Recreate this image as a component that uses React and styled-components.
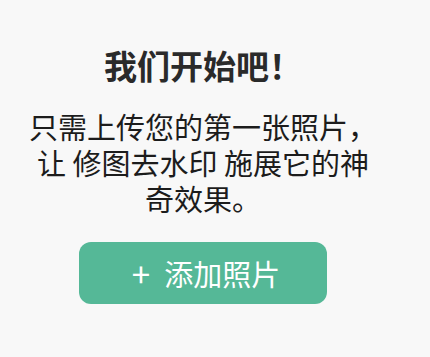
import React from "react";
import styled, { createGlobalStyle } from "styled-components";

const GlobalStyle = createGlobalStyle`
  html, body {
    margin: 0;
    padding: 0;
    background: #f8f8f8;
    font-family: "Noto Sans CJK SC", "Noto Sans", sans-serif;
  }
`;

const Page = styled.div`
  width: 356px;
  margin-left: 25px;
  padding-top: 45px;
  display: flex;
  flex-direction: column;
  align-items: center;
`;

const Title = styled.h1`
  margin: 0;
  font-size: 33px;
  line-height: 40px;
  font-weight: 700;
  color: #2a2a2a;
`;

const Message = styled.p`
  margin: 23px 0 0;
  font-size: 29px;
  line-height: 36px;
  color: #1c1c1c;
  text-align: center;
`;

const AddButton = styled.button`
  margin-top: 26px;
  width: 248px;
  height: 62px;
  border: none;
  border-radius: 12px;
  background: #55b897;
  color: #fff;
  font-family: inherit;
  font-size: 29px;
  display: flex;
  align-items: center;
  justify-content: center;
  gap: 14px;
  padding: 0 0 0 6px;
  cursor: pointer;
`;

const Plus = styled.span`
  font-size: 33px;
  font-weight: 400;
`;

export default function App() {
  return (
    <>
      <GlobalStyle />
      <Page>
        <Title>我们开始吧！</Title>
        <Message>只需上传您的第一张照片，让 修图去水印 施展它的神奇效果。</Message>
        <AddButton>
          <Plus>+</Plus>
          添加照片
        </AddButton>
      </Page>
    </>
  );
}
